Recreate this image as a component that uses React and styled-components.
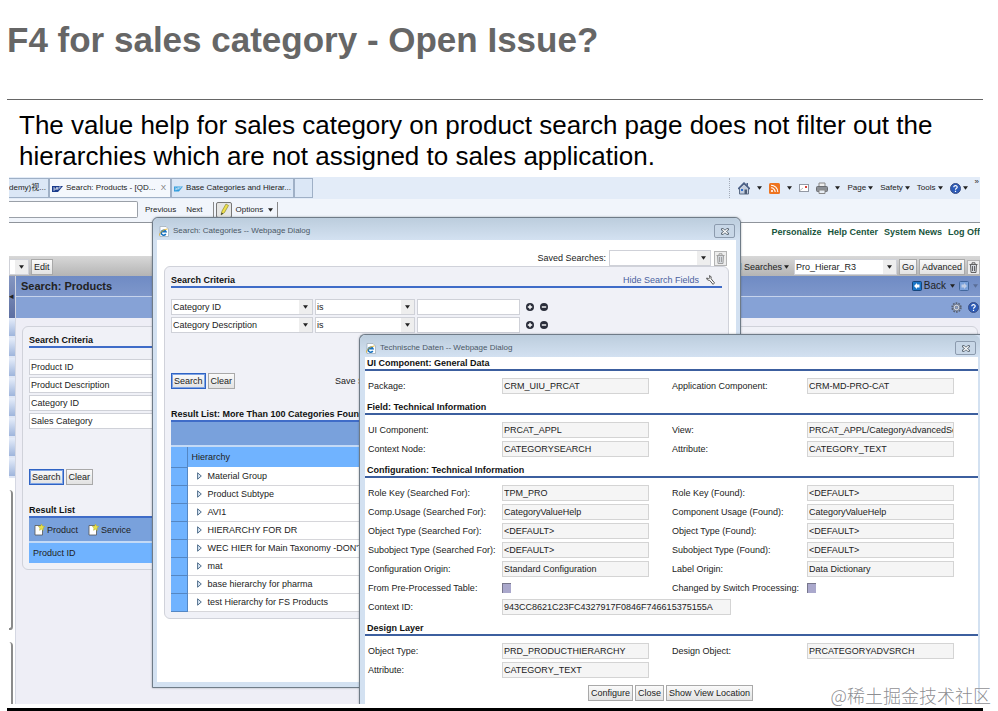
import React from 'react';
import styled, { createGlobalStyle } from 'styled-components';

const GlobalStyle = createGlobalStyle`
  * {
    box-sizing: border-box;
  }
  body {
    margin: 0;
    background: #fff;
    color: #222;
    font-family: 'Liberation Sans', Arial, 'Noto Sans CJK SC', sans-serif;
    font-size: 9px;
    line-height: 14px;
  }
  button, input, select {
    font: inherit;
    color: inherit;
    margin: 0;
  }
`;

/* ---------- slide ---------- */

const Slide = styled.main`
  position: relative;
  overflow: hidden;
`;

const SlideTitle = styled.h1`
  margin: 0 15px 0 7px;
  padding: 20px 0 39px;
  border-bottom: 1px solid #666;
  color: #666;
  font: bold 35px/40px 'Liberation Sans', Arial, sans-serif;
`;

const SlideText = styled.p`
  margin: 0;
  padding: 10px 36px 5px 19px;
  color: #000;
  font: 26px/31px 'Liberation Sans', Arial, sans-serif;
`;

const SlideFoot = styled.div`
  height: 3px;
  margin: 4px 15px 0 7px;
  background: #000;
`;

const Watermark = styled.div`
  position: absolute;
  right: 7px;
  bottom: 4px;
  color: rgba(120, 120, 125, 0.85);
  font: 300 18px/24px 'Noto Sans CJK SC', sans-serif;
  text-shadow: 0 0 1px #fff;
`;

/* ---------- browser ---------- */

const Browser = styled.section`
  position: relative;
  display: flex;
  flex-direction: column;
  min-height: 527px;
  margin: 0 18px 0 9px;
  overflow: hidden;
  white-space: nowrap;
`;

const TabStrip = styled.div`
  display: flex;
  align-items: center;
  height: 22px;
  background: #e3ecf8;
  font-size: 8px;
`;

const Tab = styled.button`
  display: flex;
  align-items: center;
  gap: 3px;
  width: ${(p) => p.$width}px;
  height: 20px;
  padding: 0 ${(p) => (p.$first ? 0 : 2)}px;
  border: 1px solid #9fb0c6;
  border-left-width: ${(p) => (p.$first ? 0 : 1)}px;
  background: ${(p) => (p.$active ? '#f4f8fd' : '#dbe7f6')};
  white-space: nowrap;
`;

const TabText = styled.span`
  flex: 1;
  text-align: left;
`;

const CloseMark = styled.span`
  padding: 0 2px;
  color: #777;
`;

const CommandBar = styled.div`
  display: flex;
  align-items: center;
  gap: 7px;
  height: 20px;
  margin-left: auto;
  padding: 0 1px 0 8px;
  border-left: 1px dotted #a3abb8;
`;

const MenuButton = styled.button`
  display: flex;
  align-items: center;
  gap: 2px;
  padding: 0;
  border: 0;
  background: none;
`;

const Overflow = styled.span`
  align-self: flex-start;
  line-height: 8px;
`;

const FindBar = styled.div`
  display: flex;
  align-items: center;
  gap: 10px;
  height: 24px;
  padding-bottom: 2px;
  border-bottom: 1px solid #8f949b;
  background: #f1f5fb;
  font-size: 8px;
`;

const FindInput = styled.input`
  width: 129px;
  height: 17px;
  margin-right: -3px;
  border: 1px solid #9aa0a8;
  border-left: 0;
  border-radius: 0 2px 2px 0;
  background: #fff;
`;

const FindTools = styled.div`
  display: flex;
  align-items: center;
  gap: 4px;
  height: 16px;
  padding: 0 4px 0 2px;
  border: solid #888;
  border-width: 0 1px;
`;

const OptionsButton = styled(MenuButton)`
  gap: 5px;
`;

const PencilButton = styled.button`
  width: 16px;
  height: 16px;
  padding: 0;
  border: 1px solid #777;
  border-radius: 2px;
  background: #e6e6e4;
`;

const LinkBar = styled.nav`
  display: flex;
  justify-content: flex-end;
  gap: 6px;
  height: 33px;
  padding-top: 2px;
`;

const TopLink = styled.a`
  color: #17543c;
  font-weight: bold;
  text-decoration: none;
`;

const SearchBar = styled.div`
  display: flex;
  align-items: center;
  justify-content: space-between;
  height: 20px;
  padding-top: 2px;
  background: linear-gradient(#d8d8d8, #b4b4b4);
`;

const BarGroup = styled.div`
  display: flex;
  align-items: center;
  gap: 2px;
`;

const SavedButton = styled.button`
  display: flex;
  align-items: center;
  gap: 2px;
  padding: 0 3px 0 0;
  border: 0;
  background: none;
`;

const Button = styled.button`
  height: 16px;
  padding: 0 2px;
  border: 1px solid ${(p) => (p.$primary ? '#2f63c4' : '#a9a9a9')};
  ${(p) => p.$primary && 'box-shadow: inset 0 0 0 1px #7fa4e4;'}
  background: linear-gradient(#fafafa, #e2e2e2);
  line-height: 14px;
`;

const IconButton = styled.button`
  display: flex;
  align-items: center;
  justify-content: center;
  width: 13px;
  height: 15px;
  padding: 0;
  border: 1px solid #b4b4b4;
  background: #ededed;
`;

const PageBody = styled.div`
  display: flex;
  flex: 1;
`;

const SideRail = styled.div`
  display: flex;
  flex-direction: column;
  width: 7px;
  border-right: 1px solid #d4d7e2;
  background: #fff;
`;

const RailHead = styled.div`
  height: 42px;
  padding-top: 14px;
  background: linear-gradient(#8496c2, #5d6fa1);
  color: #222;
  line-height: 12px;
`;

const RailItem = styled.div`
  height: 20px;
  border-bottom: 2px solid #dfe6f5;
  background: linear-gradient(#e6edfa, #9fb5dc);
`;

const RailBox = styled.div`
  height: 140px;
  margin: 12px 2px 0 0;
  border: solid #8b8b8b;
  border-width: 0 2px 2px 0;
  border-radius: 0 6px 5px 0;
`;

const RailBoxOpen = styled(RailBox)`
  flex: 1;
  height: auto;
  border-bottom: 0;
  border-radius: 0 6px 0 0;
`;

const Workspace = styled.div`
  flex: 1;
  background: #eeeef6;
`;

const WorkTitle = styled.div`
  display: flex;
  align-items: center;
  justify-content: space-between;
  height: 21px;
  padding: 0 2px 0 5px;
  border-bottom: 1px solid #c6d3ec;
  background: linear-gradient(#6f8bc4, #7e97cb);
`;

const WorkHeading = styled.h2`
  margin: 0;
  font-size: 11px;
`;

const WorkNav = styled.div`
  display: flex;
  align-items: center;
  gap: 4px;
  font-size: 10px;
`;

const WorkTools = styled.div`
  display: flex;
  align-items: center;
  justify-content: flex-end;
  gap: 6px;
  height: 21px;
  padding: 0 1px;
  background: #86a2d6;
`;

const Panel = styled.div`
  margin: ${(p) => p.$margin};
  padding: 6px;
  border: 1px solid #d0d2da;
  border-radius: 6px;
  background: #f0f1f7;
`;

const PanelHead = styled.div`
  display: flex;
  align-items: center;
  justify-content: space-between;
  height: 15px;
  border-bottom: 2px solid #3f6cc8;
`;

const PanelTitle = styled.h3`
  margin: 0;
  color: #111;
  font-size: 9px;
`;

const Fields = styled.div`
  display: flex;
  flex-direction: column;
  gap: 2px;
  padding: 11px 0 40px;
`;

const FieldLine = styled.div`
  display: flex;
  align-items: center;
  gap: 2px;
`;

const ComboBox = styled.label`
  display: flex;
  flex: ${(p) => (p.$width ? `0 0 ${p.$width}px` : 1)};
  height: 16px;
  border: 1px solid #cfd1d8;
  background: #fff;
`;

const ComboSelect = styled.select`
  flex: 1;
  min-width: 0;
  padding: 0 1px;
  border: 0;
  background: none;
  appearance: none;
  line-height: 14px;
`;

const ComboArrow = styled.span`
  display: flex;
  align-items: center;
  justify-content: center;
  width: 13px;
  background: #eee;
`;

const TextInput = styled.input`
  width: 103px;
  height: 16px;
  margin-right: 2px;
  border: 1px solid #cfd1d8;
  background: #fff;
`;

const RoundButton = styled.button`
  display: flex;
  width: 12px;
  padding: 0 2px;
  border: 0;
  background: none;
`;

const Actions = styled.div`
  display: flex;
  align-items: center;
  gap: 2px;
  height: 16px;
`;

const SaveText = styled.span`
  margin-left: 98px;
`;

const ResultTitle = styled.h3`
  margin: 18px 0 0;
  padding-top: 1px;
  border-bottom: 2px solid #3f6cc8;
  color: #111;
  font-size: 9px;
  line-height: 12px;
`;

const ResultTools = styled.div`
  display: flex;
  align-items: center;
  gap: 10px;
  height: 23px;
  padding: 0 5px;
  background: #79a1dc;
`;

const ResultTable = styled.table`
  width: 100%;
  border-collapse: collapse;

  th {
    height: 21px;
    padding: 0 4px;
    border-top: 2px solid #c4daf6;
    background: #70b3ff;
    font-weight: normal;
    text-align: left;
  }
  td {
    height: 18px;
    padding: 0 9px;
    border-bottom: 1px solid #d6d6da;
    background: #fff;
    line-height: 14px;
  }
  td:first-child, th.mark {
    width: 16px;
    padding: 0;
    border-right: 1px solid #5487c4;
    border-bottom: 1px solid #5487c4;
    background: #70b3ff;
  }
`;

const TreeCell = styled.div`
  display: flex;
  align-items: center;
  gap: 6px;
`;

/* ---------- dialogs ---------- */

const Dialog = styled.section`
  position: absolute;
  top: ${(p) => p.$top}px;
  left: ${(p) => p.$left}px;
  ${(p) => (p.$docked ? 'right: 0; bottom: 0;' : 'width: 589px; height: 471px;')}
  display: flex;
  flex-direction: column;
  padding: ${(p) => (p.$docked ? '0 2px 0 5px' : '0 4px 5px')};
  border: 1px solid #6f7b87;
  ${(p) => p.$docked && 'border-width: 1px 0 0 1px;'}
  border-radius: ${(p) => (p.$docked ? '6px 0 0 0' : '6px 6px 0 0')};
  background: #d3e1f1;
  box-shadow: 0 0 2px rgba(60, 70, 80, 0.5);
`;

const TitleBar = styled.header`
  display: flex;
  align-items: center;
  gap: 4px;
  height: 22px;
  margin: 0 ${(p) => (p.$docked ? '-2px 0 -5px' : '-4px')};
  padding: 4px ${(p) => (p.$docked ? '4px 0 6px' : '5px 0 6px')};
  border-radius: 6px 6px 0 0;
  background: linear-gradient(#bccddd, #d3e1f1);
  color: #4b5865;
  font-size: 8px;
`;

const TitleText = styled.span`
  flex: 1;
`;

const CloseButton = styled.button`
  display: flex;
  align-items: center;
  justify-content: center;
  width: 21px;
  height: 14px;
  padding: 0;
  border: 1px solid #8c9bae;
  border-radius: 2px;
  background: #c8d7e7;
`;

const DialogBody = styled.div`
  flex: 1;
  background: #fff;
`;

const SavedRow = styled.div`
  display: flex;
  align-items: center;
  justify-content: flex-end;
  gap: 3px;
  padding: 10px 9px 0 0;
`;

const HideLink = styled.a`
  margin-left: auto;
  color: #4a5f9e;
  text-decoration: none;
`;

const ToolSlot = styled.span`
  display: flex;
  padding: 0 7px;
`;

const SectionTitle = styled.h3`
  height: 14px;
  margin: 0;
  padding-left: 2px;
  border-bottom: 2px solid #3c5f9f;
  color: #111;
  font-size: 9px;
  line-height: 12px;
`;

const DataGrid = styled.div`
  display: grid;
  grid-template-columns: 134px 147px 23px 135px 147px;
  grid-auto-rows: 19px;
  align-items: center;
  padding: 5px 0 6px 3px;
`;

const DataLabel = styled.label`
  grid-column: ${(p) => (p.$right ? 4 : 1)};
`;

const DataInput = styled.input`
  grid-column: ${(p) => (p.$wide ? '2 / span 3' : 'auto')};
  width: ${(p) => (p.$wide ? '229px' : '100%')};
  height: 16px;
  padding: 0 0 0 1px;
  border: 1px solid #d4d4d4;
  background: #f5f5f5;
`;

const DataCheck = styled.input`
  width: 9px;
  height: 10px;
  border: solid #77768c;
  border-width: 1px 0 0 1px;
  background: #aaa8cc;
  appearance: none;
`;

const DialogActions = styled.div`
  display: flex;
  gap: 2px;
  padding: 0 0 0 223px;
`;

/* ---------- icons ---------- */

const Arrow = ({ color = '#222' }) => (
  <svg width="5" height="4" viewBox="0 0 6 4">
    <path d="M0 0h6L3 4z" fill={color} />
  </svg>
);

const SapIcon = ({ color }) => (
  <svg width="11" height="7" viewBox="0 0 11 7">
    <path d="M0 1h11L6 7H0z" fill={color} />
    <path d="M1 3h2v2H1m3 0l1-3 1 3m1-1V2h2" fill="none" stroke="#fff" strokeWidth=".7" />
  </svg>
);

const IeIcon = () => (
  <svg width="10" height="11" viewBox="0 0 10 11">
    <path d="M1 .5h6l2.500 2.500v7.500H1z" fill="#fff" stroke="#9aa7b4" strokeWidth=".7" />
    <path d="M6.800 8A2.500 2.500 0 1 1 7 5.800H2.500" fill="none" stroke="#1470c0" strokeWidth="1.500" />
    <path d="M.5 9.500C0 7 4 3.500 8.500 3" fill="none" stroke="#e9b11c" strokeWidth=".9" />
  </svg>
);

const CloseIcon = () => (
  <svg width="8" height="7" viewBox="0 0 9 8">
    <path d="M1.500 1.500l6 5m0-5l-6 5" stroke="#5c6874" strokeWidth="3" strokeLinecap="square" />
    <path d="M1.500 1.500l6 5m0-5l-6 5" stroke="#fff" strokeWidth="1.400" />
  </svg>
);

const TrashIcon = ({ color = '#555' }) => (
  <svg width="9" height="11" viewBox="0 0 9 11">
    <path d="M1.500 3h6L7 10.500H2z" fill="#d5d9de" />
    <path d="M0.500 2.500h8M3 2V.8h3V2M1.500 3l.5 7.500h5L7.500 3M3.500 4v5M5.500 4v5" fill="none" stroke={color} strokeWidth=".9" />
  </svg>
);

const WrenchIcon = () => (
  <svg width="9" height="10" viewBox="0 0 9 10">
    <path d="M3.500.6C5 1 5.500 2.500 5 3.700l3.500 4.200-1.400 1.500L3.600 5.300C2 5.600.7 4.600.7 3l2 .7 1.200-1z" fill="#fff" stroke="#444" strokeWidth=".9" />
  </svg>
);

const HomeIcon = () => (
  <svg width="12" height="13" viewBox="0 0 12 13">
    <path d="M1.500 6v6h9V6L6 2z" fill="#c3cddd" stroke="#5d6d86" />
    <path d="M0 7l6-6 6 6" fill="none" stroke="#4a5f86" strokeWidth="1.500" />
    <path d="M8.500 1h1.500v3.500L8.500 3z" fill="#4a5f86" />
    <path d="M3 7h2v2H3z" fill="#2f6fd0" />
    <path d="M6.500 7.500h2.500V12H6.500z" fill="#4d5c74" />
  </svg>
);

const FeedIcon = () => (
  <svg width="11" height="11" viewBox="0 0 11 11">
    <rect width="11" height="11" rx="1.500" fill="#ee7420" />
    <circle cx="3" cy="8" r="1.100" fill="#fff" />
    <path d="M2 4.800A4.200 4.200 0 0 1 6.200 9M2 2.200A6.800 6.800 0 0 1 8.800 9" fill="none" stroke="#fff" strokeWidth="1.100" />
  </svg>
);

const MailIcon = () => (
  <svg width="10" height="8" viewBox="0 0 10 8">
    <rect x=".5" y=".5" width="9" height="7" fill="#fff" stroke="#9298a3" />
    <path d="M1 6.500l3-2.500" stroke="#bbb" />
    <path d="M6 2h2v2H6z" fill="#d8403a" />
  </svg>
);

const PrintIcon = () => (
  <svg width="12" height="12" viewBox="0 0 12 12">
    <path d="M3 1h6v4H3z" fill="#eee" stroke="#888" />
    <rect x=".5" y="4.500" width="11" height="5" rx="1" fill="#8b8f95" stroke="#6a6d72" />
    <path d="M3 8h6v3.500H3z" fill="#e8eef5" stroke="#888" />
  </svg>
);

const HelpIcon = () => (
  <svg width="11" height="11" viewBox="0 0 11 11">
    <circle cx="5.500" cy="5.500" r="5" fill="#2c5bb8" stroke="#3a4f86" />
    <path d="M3.800 4.300c0-2.300 3.600-2.100 3.400 0C7.200 5.300 5.500 5.400 5.500 6.800M5.500 7.800v1.300" fill="none" stroke="#fff" strokeWidth="1.200" />
  </svg>
);

const PencilIcon = () => (
  <svg width="14" height="14" viewBox="0 0 14 14">
    <path d="M4 12l1-4 4-7 2.500 1.500-4 7z" fill="#efe04a" stroke="#8d8a35" strokeWidth=".7" />
    <path d="M4 12l.6-2.500 1.600.9z" fill="#333" />
  </svg>
);

const GearIcon = () => (
  <svg width="11" height="11" viewBox="0 0 11 11">
    <circle cx="5.500" cy="5.500" r="4.400" fill="none" stroke="#596273" strokeWidth="1.600" strokeDasharray="1.700 1.060" />
    <circle cx="5.500" cy="5.500" r="3.200" fill="#dde2ea" stroke="#596273" strokeWidth=".8" />
    <circle cx="5.500" cy="5.500" r="1.300" fill="#86a2d6" stroke="#596273" strokeWidth=".7" />
  </svg>
);

const NavIcon = ({ dim }) => (
  <svg width="10" height="10" viewBox="0 0 10 10" opacity={dim ? 0.55 : 1}>
    <rect x=".5" y=".5" width="9" height="9" rx="1" fill={dim ? '#7fb0ec' : '#1976c8'} stroke="#17457a" />
    <path d={dim ? 'M8 5L5 2v1.500H2.500v3H5V8z' : 'M2 5l3-3v1.500h2.500v3H5V8z'} fill="#fff" />
  </svg>
);

const NewIcon = () => (
  <svg width="11" height="12" viewBox="0 0 11 12">
    <path d="M1 1.500h6l1.500 2v7.500H1z" fill="#fff" stroke="#555" strokeWidth=".8" />
    <path d="M7.500 0l1 2 2.300.6L9 4l.3 2.500L7.500 5.200 5.500 6.300 6 4 4.300 2.500l2.300-.4z" fill="#e8e14c" stroke="#b5ad2a" strokeWidth=".5" />
  </svg>
);

const PlusMinus = ({ minus }) => (
  <svg width="8" height="8" viewBox="0 0 8 8">
    <circle cx="4" cy="4" r="4" fill="#2a2d3a" />
    <path d={minus ? 'M1.800 4h4.400' : 'M1.800 4h4.400M4 1.800v4.400'} stroke="#fff" strokeWidth="1.400" />
  </svg>
);

const TreeIcon = () => (
  <svg width="5" height="8" viewBox="0 0 5 8">
    <path d="M.6.8v6.400L4.300 4z" fill="#dceaf8" stroke="#3f607f" strokeWidth=".9" />
  </svg>
);

/* ---------- data ---------- */

const productFields = ['Product ID', 'Product Description', 'Category ID', 'Sales Category'];

const categoryFields = ['Category ID', 'Category Description'];

const hierarchies = [
  'Material Group',
  'Product Subtype',
  'AVI1',
  'HIERARCHY FOR DR',
  "WEC HIER for Main Taxonomy -DON'T",
  'mat',
  'base hierarchy for pharma',
  'test Hierarchy for FS Products',
];

const sections = [
  {
    title: 'UI Component: General Data',
    rows: [['Package:', 'CRM_UIU_PRCAT', 'Application Component:', 'CRM-MD-PRO-CAT']],
  },
  {
    title: 'Field: Technical Information',
    rows: [
      ['UI Component:', 'PRCAT_APPL', 'View:', 'PRCAT_APPL/CategoryAdvancedSe'],
      ['Context Node:', 'CATEGORYSEARCH', 'Attribute:', 'CATEGORY_TEXT'],
    ],
  },
  {
    title: 'Configuration: Technical Information',
    rows: [
      ['Role Key (Searched For):', 'TPM_PRO', 'Role Key (Found):', '<DEFAULT>'],
      ['Comp.Usage (Searched For):', 'CategoryValueHelp', 'Component Usage (Found):', 'CategoryValueHelp'],
      ['Object Type (Searched For):', '<DEFAULT>', 'Object Type (Found):', '<DEFAULT>'],
      ['Subobject Type (Searched For):', '<DEFAULT>', 'Subobject Type (Found):', '<DEFAULT>'],
      ['Configuration Origin:', 'Standard Configuration', 'Label Origin:', 'Data Dictionary'],
      ['From Pre-Processed Table:', false, 'Changed by Switch Processing:', false],
      ['Context ID:', '943CC8621C23FC4327917F0846F746615375155A'],
    ],
  },
  {
    title: 'Design Layer',
    rows: [
      ['Object Type:', 'PRD_PRODUCTHIERARCHY', 'Design Object:', 'PRCATEGORYADVSRCH'],
      ['Attribute:', 'CATEGORY_TEXT'],
    ],
  },
];

/* ---------- components ---------- */

const Combo = ({ name, value, width }) => (
  <ComboBox $width={width}>
    <ComboSelect aria-label={name}>
      <option>{value}</option>
    </ComboSelect>
    <ComboArrow>
      <Arrow />
    </ComboArrow>
  </ComboBox>
);

const DataField = ({ id, label, value, right, wide }) => (
  <>
    <DataLabel htmlFor={id} $right={right}>{label}</DataLabel>
    {value === false ? (
      <DataCheck id={id} type="checkbox" disabled />
    ) : (
      <DataInput id={id} defaultValue={value} readOnly $wide={wide} />
    )}
  </>
);

const BrowserChrome = () => (
  <>
    <TabStrip>
      <Tab $width={40} $first>
        <TabText>demy)视...</TabText>
      </Tab>
      <Tab $width={122} $active>
        <SapIcon color="#1b3c8c" />
        <TabText>Search: Products - [QD...</TabText>
        <CloseMark>X</CloseMark>
      </Tab>
      <Tab $width={123}>
        <SapIcon color="#2f9bdc" />
        <TabText>Base Categories and Hierar...</TabText>
      </Tab>
      <Tab $width={19} aria-label="New tab" />
      <CommandBar>
        <MenuButton aria-label="Home"><HomeIcon /></MenuButton>
        <Arrow />
        <MenuButton aria-label="Feeds"><FeedIcon /></MenuButton>
        <Arrow />
        <MenuButton aria-label="Read mail"><MailIcon /></MenuButton>
        <MenuButton aria-label="Print"><PrintIcon /></MenuButton>
        <Arrow />
        <MenuButton>Page<Arrow /></MenuButton>
        <MenuButton>Safety<Arrow /></MenuButton>
        <MenuButton>Tools<Arrow /></MenuButton>
        <MenuButton aria-label="Help"><HelpIcon /><Arrow /></MenuButton>
        <Overflow>»</Overflow>
      </CommandBar>
    </TabStrip>
    <FindBar>
      <FindInput aria-label="Find" />
      <MenuButton>Previous</MenuButton>
      <MenuButton>Next</MenuButton>
      <FindTools>
        <PencilButton aria-label="Highlight"><PencilIcon /></PencilButton>
        <OptionsButton>Options<Arrow /></OptionsButton>
      </FindTools>
    </FindBar>
  </>
);

const ProductPage = () => (
  <>
    <LinkBar>
      <TopLink href="#personalize">Personalize</TopLink>
      <TopLink href="#help">Help Center</TopLink>
      <TopLink href="#news">System News</TopLink>
      <TopLink href="#logoff">Log Off</TopLink>
    </LinkBar>
    <SearchBar>
      <BarGroup>
        <Combo name="Page" value="" width={20} />
        <Button>Edit</Button>
      </BarGroup>
      <BarGroup>
        <SavedButton>Saved Searches<Arrow /></SavedButton>
        <Combo name="Saved search" value="Pro_Hierar_R3" width={103} />
        <Button>Go</Button>
        <Button>Advanced</Button>
        <IconButton aria-label="Delete search"><TrashIcon /></IconButton>
      </BarGroup>
    </SearchBar>
    <PageBody>
      <SideRail>
        <RailHead>◂</RailHead>
        {Array.from({ length: 8 }, (_, i) => <RailItem key={i} />)}
        <RailBox />
        <RailBoxOpen />
      </SideRail>
      <Workspace>
        <WorkTitle>
          <WorkHeading>Search: Products</WorkHeading>
          <WorkNav>
            <MenuButton><NavIcon />Back</MenuButton>
            <Arrow />
            <NavIcon dim />
            <Arrow color="#5a6d96" />
          </WorkNav>
        </WorkTitle>
        <WorkTools>
          <GearIcon />
          <HelpIcon />
        </WorkTools>
        <Panel $margin="8px 2px 0 6px">
          <PanelHead>
            <PanelTitle>Search Criteria</PanelTitle>
          </PanelHead>
          <Fields>
            {productFields.map((field) => (
              <FieldLine key={field}>
                <Combo name={field} value={field} />
              </FieldLine>
            ))}
          </Fields>
          <Actions>
            <Button $primary>Search</Button>
            <Button>Clear</Button>
          </Actions>
          <ResultTitle>Result List</ResultTitle>
          <ResultTools>
            <MenuButton><NewIcon />Product</MenuButton>
            <MenuButton><NewIcon />Service</MenuButton>
          </ResultTools>
          <ResultTable>
            <thead>
              <tr><th>Product ID</th></tr>
            </thead>
          </ResultTable>
        </Panel>
      </Workspace>
    </PageBody>
  </>
);

const CategoryDialog = () => (
  <Dialog $top={40} $left={143}>
    <TitleBar>
      <IeIcon />
      <TitleText>Search: Categories -- Webpage Dialog</TitleText>
      <CloseButton aria-label="Close"><CloseIcon /></CloseButton>
    </TitleBar>
    <DialogBody>
      <SavedRow>
        <span>Saved Searches:</span>
        <Combo name="Saved Searches" value="" width={102} />
        <IconButton aria-label="Delete"><TrashIcon color="#999" /></IconButton>
      </SavedRow>
      <Panel $margin="0 7px 0 7px">
        <PanelHead>
          <PanelTitle>Search Criteria</PanelTitle>
          <HideLink href="#fields">Hide Search Fields</HideLink>
          <ToolSlot><WrenchIcon /></ToolSlot>
        </PanelHead>
        <Fields>
          {categoryFields.map((field) => (
            <FieldLine key={field}>
              <Combo name="Field" value={field} width={142} />
              <Combo name="Operator" value="is" width={100} />
              <TextInput aria-label={field} />
              <RoundButton aria-label="Add line"><PlusMinus /></RoundButton>
              <RoundButton aria-label="Remove line"><PlusMinus minus /></RoundButton>
            </FieldLine>
          ))}
        </Fields>
        <Actions>
          <Button $primary>Search</Button>
          <Button>Clear</Button>
          <SaveText>Save S</SaveText>
        </Actions>
        <ResultTitle>Result List: More Than 100 Categories Found</ResultTitle>
        <ResultTools />
        <ResultTable>
          <thead>
            <tr>
              <th className="mark" />
              <th>Hierarchy</th>
            </tr>
          </thead>
          <tbody>
            {hierarchies.map((name) => (
              <tr key={name}>
                <td />
                <td>
                  <TreeCell>
                    <TreeIcon />
                    {name}
                  </TreeCell>
                </td>
              </tr>
            ))}
          </tbody>
        </ResultTable>
      </Panel>
    </DialogBody>
  </Dialog>
);

const TechnicalDialog = () => (
  <Dialog $top={157} $left={350} $docked>
    <TitleBar $docked>
      <IeIcon />
      <TitleText>Technische Daten -- Webpage Dialog</TitleText>
      <CloseButton aria-label="Close"><CloseIcon /></CloseButton>
    </TitleBar>
    <DialogBody>
      {sections.map((section, s) => (
        <React.Fragment key={section.title}>
          <SectionTitle>{section.title}</SectionTitle>
          <DataGrid>
            {section.rows.map(([label, value, label2, value2], r) => (
              <React.Fragment key={label}>
                <DataField id={`f${s}-${r}-a`} label={label} value={value} wide={label === 'Context ID:'} />
                {label2 && <DataField id={`f${s}-${r}-b`} label={label2} value={value2} right />}
              </React.Fragment>
            ))}
          </DataGrid>
        </React.Fragment>
      ))}
      <DialogActions>
        <Button>Configure</Button>
        <Button>Close</Button>
        <Button>Show View Location</Button>
      </DialogActions>
    </DialogBody>
  </Dialog>
);

const App = () => (
  <>
    <GlobalStyle />
    <Slide>
      <SlideTitle>F4 for sales category - Open Issue?</SlideTitle>
      <SlideText>
        The value help for sales category on product search page does not filter out the
        hierarchies which are not assigned to sales application.
      </SlideText>
      <Browser>
        <BrowserChrome />
        <ProductPage />
        <CategoryDialog />
        <TechnicalDialog />
      </Browser>
      <SlideFoot />
      <Watermark>@稀土掘金技术社区</Watermark>
    </Slide>
  </>
);

export default App;
